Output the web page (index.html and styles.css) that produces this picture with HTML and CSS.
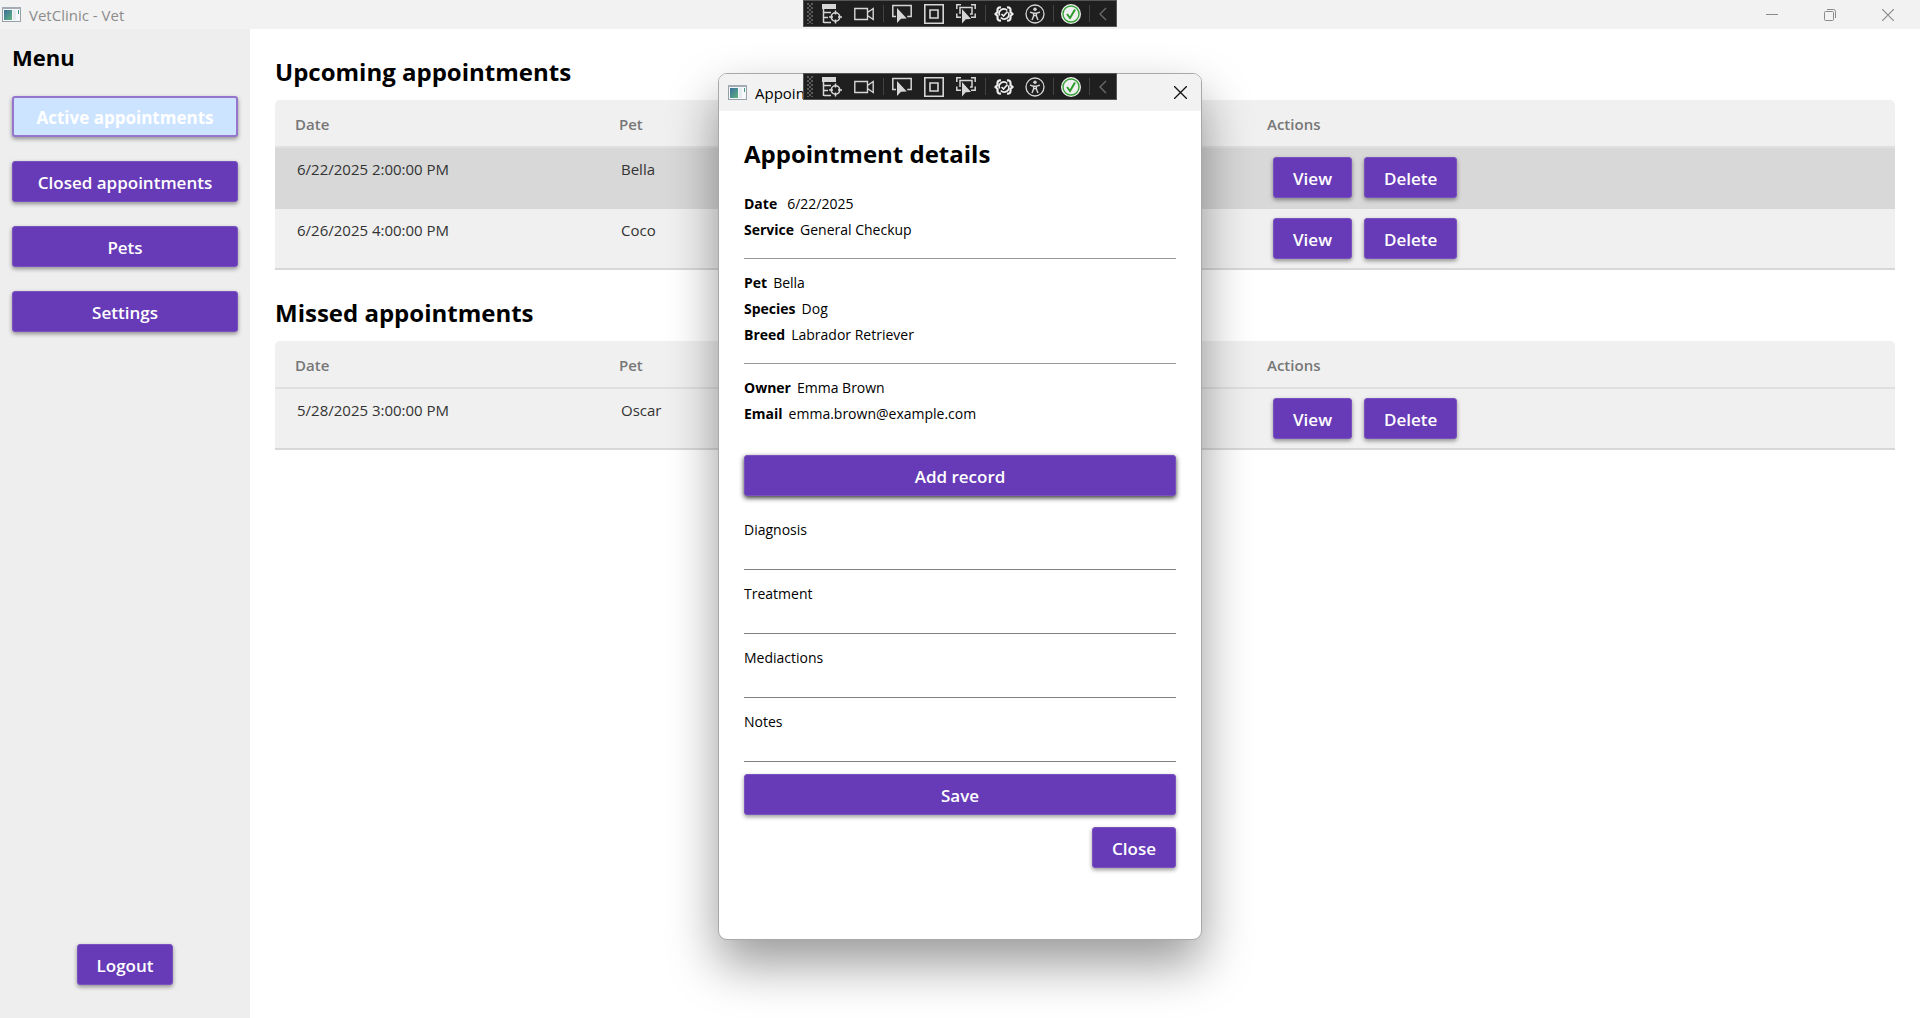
FILE: index.html
```html
<!DOCTYPE html>
<html lang="en">
<head>
<meta charset="utf-8">
<title>VetClinic - Vet</title>
<link rel="stylesheet" href="styles.css">
</head>
<body>
<svg class="sprite" aria-hidden="true">
  <symbol id="app" viewBox="0 0 19 15">
    <rect x="0.500" y="0.500" width="18" height="14" fill="#f6f8fa" stroke="#98a0a8"/>
    <rect x="0" y="0" width="19" height="2" fill="#a3acb5"/>
    <rect x="2" y="3" width="8" height="10" fill="url(#appfill)"/>
    <rect x="11" y="3" width="3" height="10" fill="#e6ebef"/>
    <rect x="16" y="3" width="1" height="4" fill="#3f9a80"/>
  </symbol>
  <linearGradient id="appfill" x1="0" y1="0" x2="1" y2="1">
    <stop offset="0" stop-color="#3b6fa0"/><stop offset="1" stop-color="#5fb37c"/>
  </linearGradient>
  <symbol id="tree" viewBox="0 0 20 20">
    <path d="M0 0h14v5H0z" fill="#d6d6d6"/>
    <path d="M1.500 5v14M2 8.500h7M2 13.500h4M2 18.500h7" fill="none" stroke="#d6d6d6" stroke-width="1.500"/>
    <circle cx="13.500" cy="13" r="4.200" fill="none" stroke="#d6d6d6" stroke-width="1.600"/>
    <path d="M13.500 6.500v4M13.500 15.500v4M7 13h4M16 13h4" stroke="#d6d6d6" stroke-width="1.500"/>
  </symbol>
  <symbol id="camera" viewBox="0 0 20 20">
    <path d="M.8 4.500h12.700v11H.8zM13.500 8.500l5.700-4v11l-5.700-4z" fill="none" stroke="#d6d6d6" stroke-width="1.400"/>
  </symbol>
  <symbol id="pick" viewBox="0 0 20 20">
    <path d="M4 12.500H.8V1.500h18.400v11h-4" fill="none" stroke="#d6d6d6" stroke-width="1.500"/>
    <path d="M5 4v15l4-4.300 5.800-.2z" fill="#d6d6d6"/>
  </symbol>
  <symbol id="adorn" viewBox="0 0 20 20">
    <path d="M.8 .8h18.400v18.400H.8zM6 6h8v8H6z" fill="none" stroke="#d6d6d6" stroke-width="1.600"/>
  </symbol>
  <symbol id="focus" viewBox="0 0 20 20">
    <path d="M.8 5V.8H5M15 .8h4.200V5M.8 9.500v3.700H5M19.200 9.500v3.700H15M4 10V3.500h12V10h-2" fill="none" stroke="#d6d6d6" stroke-width="1.500"/>
    <path d="M6 5v14.500l3.800-4.200 5.200-.2z" fill="#d6d6d6"/>
  </symbol>
  <symbol id="reload" viewBox="0 0 20 20">
    <path d="M7 3.500Q3.500 3 3.500 6v2L1.500 10l2 2v2q0 3 3.500 2.500M13 3.500q3.500-.5 3.500 2.500v2l2 2-2 2v2q0 3-3.500 2.500" fill="none" stroke="#eee" stroke-width="2.200"/>
    <path d="M5.600 11.500a4.600 4.600 0 0 1 7.600-5M14.400 8.500a4.600 4.600 0 0 1-7.600 5M7.500 10l2 2 4-4.500" fill="none" stroke="#eee" stroke-width="1.700"/>
  </symbol>
  <symbol id="person" viewBox="0 0 20 20">
    <circle cx="10" cy="10" r="9" fill="none" stroke="#d6d6d6" stroke-width="1.300"/>
    <circle cx="10" cy="5.200" r="1.700" fill="#d6d6d6"/>
    <path d="M5 8.200l3.500 1h3l3.500-1M8.600 9v3l-1.600 4M11.400 9v3l1.600 4M8.600 11.500h2.800" fill="none" stroke="#d6d6d6" stroke-width="1.400"/>
  </symbol>
  <symbol id="ok" viewBox="0 0 20 20">
    <circle cx="10" cy="10" r="10" fill="#f0f0f0"/>
    <circle cx="10" cy="10" r="8" fill="none" stroke="#37a337" stroke-width="1.400"/>
    <path d="M6 10l3 4 5-8.500" fill="none" stroke="#2c9b2c" stroke-width="2"/>
  </symbol>
  <symbol id="back" viewBox="0 0 20 20">
    <path d="M13 4l-6 6 6 6" fill="none" stroke="#6a6a6a" stroke-width="1.400"/>
  </symbol>
  <symbol id="cross" viewBox="0 0 12 12"><path d="M0 0l12 12M12 0L0 12" stroke="currentColor" stroke-width="1.200"/></symbol>
  <symbol id="dash" viewBox="0 0 12 12"><path d="M0 5.500h12" stroke="currentColor"/></symbol>
  <symbol id="restore" viewBox="0 0 12 12">
    <rect x=".5" y="2.500" width="9" height="9" rx="1" fill="none" stroke="currentColor"/>
    <path d="M3 .5h6.500q2 0 2 2V9" fill="none" stroke="currentColor"/>
  </symbol>
</svg>

<div class="window">
  <header class="titlebar">
    <svg class="app-icon"><use href="#app"/></svg>
    <span>VetClinic - Vet</span>
    <div class="window-controls">
      <button type="button" aria-label="Minimize"><svg><use href="#dash"/></svg></button>
      <button type="button" aria-label="Restore"><svg><use href="#restore"/></svg></button>
      <button type="button" aria-label="Close window"><svg><use href="#cross"/></svg></button>
    </div>
  </header>
  <div class="debugbar">
    <i class="grip"></i>
    <button type="button" aria-label="Live visual tree"><svg><use href="#tree"/></svg></button>
    <button type="button" aria-label="Record"><svg><use href="#camera"/></svg></button>
    <i class="sep"></i>
    <button type="button" aria-label="Select element"><svg><use href="#pick"/></svg></button>
    <button type="button" aria-label="Layout adorners"><svg><use href="#adorn"/></svg></button>
    <button type="button" aria-label="Track focus"><svg><use href="#focus"/></svg></button>
    <i class="sep"></i>
    <button type="button" aria-label="Binding failures"><svg><use href="#reload"/></svg></button>
    <button type="button" class="mid" aria-label="Accessibility"><svg><use href="#person"/></svg></button>
    <i class="sep"></i>
    <button type="button" class="mid" aria-label="Hot reload"><svg><use href="#ok"/></svg></button>
    <i class="sep"></i>
    <button type="button" class="small" aria-label="Collapse"><svg><use href="#back"/></svg></button>
  </div>

  <div class="body">
    <nav class="sidebar">
      <h2>Menu</h2>
      <button type="button" class="btn active">Active appointments</button>
      <button type="button" class="btn">Closed appointments</button>
      <button type="button" class="btn">Pets</button>
      <button type="button" class="btn">Settings</button>
      <button type="button" class="btn logout">Logout</button>
    </nav>
    <main class="content">
      <section>
        <h1>Upcoming appointments</h1>
        <table>
          <thead><tr><th>Date</th><th>Pet</th><th></th><th>Actions</th><th></th></tr></thead>
          <tbody>
            <tr class="selected"><td>6/22/2025 2:00:00 PM</td><td>Bella</td><td></td><td class="actions-cell"><div class="actions"><button type="button" class="btn">View</button><button type="button" class="btn">Delete</button></div></td><td></td></tr>
            <tr><td>6/26/2025 4:00:00 PM</td><td>Coco</td><td></td><td class="actions-cell"><div class="actions"><button type="button" class="btn">View</button><button type="button" class="btn">Delete</button></div></td><td></td></tr>
          </tbody>
        </table>
      </section>
      <section>
        <h1>Missed appointments</h1>
        <table>
          <thead><tr><th>Date</th><th>Pet</th><th></th><th>Actions</th><th></th></tr></thead>
          <tbody>
            <tr><td>5/28/2025 3:00:00 PM</td><td>Oscar</td><td></td><td class="actions-cell"><div class="actions"><button type="button" class="btn">View</button><button type="button" class="btn">Delete</button></div></td><td></td></tr>
          </tbody>
        </table>
      </section>
    </main>
  </div>
</div>

<div class="overlay">
  <div class="dialog" role="dialog" aria-labelledby="details-title">
    <header class="dialog-bar">
      <svg class="app-icon"><use href="#app"/></svg>
      <span>Appoin</span>
      <button type="button" class="dialog-x" aria-label="Close dialog"><svg><use href="#cross"/></svg></button>
    </header>
    <div class="debugbar">
      <i class="grip"></i>
      <button type="button" aria-label="Live visual tree"><svg><use href="#tree"/></svg></button>
      <button type="button" aria-label="Record"><svg><use href="#camera"/></svg></button>
      <i class="sep"></i>
      <button type="button" aria-label="Select element"><svg><use href="#pick"/></svg></button>
      <button type="button" aria-label="Layout adorners"><svg><use href="#adorn"/></svg></button>
      <button type="button" aria-label="Track focus"><svg><use href="#focus"/></svg></button>
      <i class="sep"></i>
      <button type="button" aria-label="Binding failures"><svg><use href="#reload"/></svg></button>
      <button type="button" class="mid" aria-label="Accessibility"><svg><use href="#person"/></svg></button>
      <i class="sep"></i>
      <button type="button" class="mid" aria-label="Hot reload"><svg><use href="#ok"/></svg></button>
      <i class="sep"></i>
      <button type="button" class="small" aria-label="Collapse"><svg><use href="#back"/></svg></button>
    </div>
    <div class="dialog-body">
      <h1 id="details-title">Appointment details</h1>
      <dl>
        <div class="wide"><dt>Date</dt><dd>6/22/2025</dd></div>
        <div><dt>Service</dt><dd>General Checkup</dd></div>
      </dl>
      <hr>
      <dl>
        <div><dt>Pet</dt><dd>Bella</dd></div>
        <div><dt>Species</dt><dd>Dog</dd></div>
        <div><dt>Breed</dt><dd>Labrador Retriever</dd></div>
      </dl>
      <hr>
      <dl>
        <div><dt>Owner</dt><dd>Emma Brown</dd></div>
        <div><dt>Email</dt><dd>emma.brown@example.com</dd></div>
      </dl>
      <button type="button" class="btn add">Add record</button>
      <form class="record">
        <div class="field"><label for="diagnosis">Diagnosis</label><input id="diagnosis" type="text"></div>
        <div class="field"><label for="treatment">Treatment</label><input id="treatment" type="text"></div>
        <div class="field"><label for="medications">Mediactions</label><input id="medications" type="text"></div>
        <div class="field"><label for="notes">Notes</label><input id="notes" type="text"></div>
        <button type="button" class="btn save">Save</button>
        <button type="button" class="btn close">Close</button>
      </form>
    </div>
  </div>
</div>
</body>
</html>
```
FILE: styles.css
```css
* { box-sizing: border-box; margin: 0; padding: 0; }

body {
  font-family: "Open Sans", "Noto Sans", sans-serif;
  font-size: 15px;
  color: #000;
  background: #fff;
}

button { font: inherit; border: 0; background: none; }
.sprite { position: absolute; width: 0; height: 0; }

.window { display: flex; flex-direction: column; min-height: 100vh; position: relative; }

.titlebar {
  display: flex;
  align-items: center;
  height: 29px;
  padding: 0 3px 0 2px;
  background: #f2f2f2;
  color: #8c8c8c;
}
.app-icon { width: 19px; height: 15px; margin-right: 8px; }
.window-controls { display: flex; margin-left: auto; color: #8a8a8a; }
.window-controls button { display: flex; align-items: center; justify-content: center; width: 58px; height: 29px; color: inherit; }
.window-controls svg { width: 12px; height: 12px; }

.debugbar {
  position: absolute;
  top: 0;
  left: 50%;
  transform: translateX(-50%);
  display: flex;
  align-items: center;
  width: 314px;
  height: 27px;
  border: 1px solid #555;
  background: #1f1f1f;
}
.dialog .debugbar { top: -1px; }
.debugbar button { display: flex; justify-content: center; width: 32px; }
.debugbar .mid { width: 30px; }
.debugbar .small { width: 22px; }
.debugbar svg { width: 20px; height: 20px; }
.grip {
  width: 6px;
  height: 21px;
  margin: 0 3px;
  background: radial-gradient(circle at 1px 1px, #5a5a5a 1px, transparent 1px) 0 0 / 4px 4px,
              radial-gradient(circle at 3px 3px, #5a5a5a 1px, transparent 1px) 0 0 / 4px 4px;
}
.sep { width: 6px; height: 17px; background: linear-gradient(#424242, #424242) center / 1px 100% no-repeat; }

.body { display: flex; flex: 1; }

.sidebar {
  display: flex;
  flex-direction: column;
  gap: 24px;
  width: 250px;
  padding: 13px 12px 33px;
  background: #eee;
}
.sidebar h2 { font-size: 22px; font-weight: 700; line-height: 30px; }
.logout { align-self: center; margin-top: auto; }

.btn {
  height: 41px;
  padding: 1px 19px 0;
  border: 1px solid #7a52c0;
  border-radius: 3px;
  background: #673ab7;
  color: #fff;
  font-size: 17px;
  font-weight: 600;
  box-shadow: 0 2px 4px rgba(0, 0, 0, .4);
}
.btn.active { border: 2px solid #9575cd; background: #cce4ff; font-weight: 700; padding: 1px 0 0; }

.content { flex: 1; padding: 26px 25px; }
h1 { font-size: 24px; font-weight: 700; line-height: 34px; }
.content h1 { margin-bottom: 11px; }
.content section + section { margin-top: 26px; }

table {
  width: 100%;
  table-layout: fixed;
  border-collapse: separate;
  border-spacing: 0;
  background: #f0f0f0;
  border-radius: 5px 5px 0 0;
}
th {
  height: 48px;
  padding: 1px 20px 0;
  border-bottom: 2px solid #e0e0e0;
  color: #777;
  font-weight: 600;
  text-align: left;
}
td { height: 61px; padding: 11px 22px 0; vertical-align: top; color: #333; }
tr:last-child td { border-bottom: 2px solid #d8d8d8; }
.actions-cell { padding: 9px 0 0 26px; }
.selected td { background: #d8d8d8; }
.actions { display: flex; gap: 12px; }

.overlay {
  position: absolute;
  top: 0;
  left: 0;
  width: 100%;
  display: flex;
  justify-content: center;
  padding-top: 73px;
}
.dialog {
  position: relative;
  width: 484px;
  border: 1px solid #a8a8a8;
  border-radius: 9px;
  background: #fff;
  box-shadow: 0 24px 50px rgba(0, 0, 0, .4);
}
.dialog-bar {
  display: flex;
  align-items: center;
  height: 37px;
  padding: 0 14px 0 9px;
  border-radius: 8px 8px 0 0;
  background: #f2f2f2;
}
.dialog-x { margin-left: auto; color: #111; }
.dialog-x svg { display: block; width: 13px; height: 13px; }
.dialog-body { display: flex; flex-direction: column; padding: 26px 25px 71px; font-size: 14px; }

dl { display: flex; flex-direction: column; }
dl div { display: flex; gap: 6px; line-height: 26px; }
.dialog-body h1 { margin-bottom: 20px; }
.wide { gap: 10px; }
dt { font-weight: 700; }
hr { height: 1px; margin: 15px 0 11px; border: 0; background: #999; }
.add { margin-top: 28px; box-shadow: 0 2px 5px rgba(0, 0, 0, .8); }

.record { display: flex; flex-direction: column; margin-top: 23px; }
.field { display: flex; flex-direction: column; height: 64px; }
.field:nth-of-type(4) { height: 63px; }
.field label { line-height: 22px; }
.field input { height: 29px; border: 0; border-bottom: 1px solid #808080; background: transparent; font: inherit; }
.close { align-self: flex-end; margin-top: 12px; }
```
